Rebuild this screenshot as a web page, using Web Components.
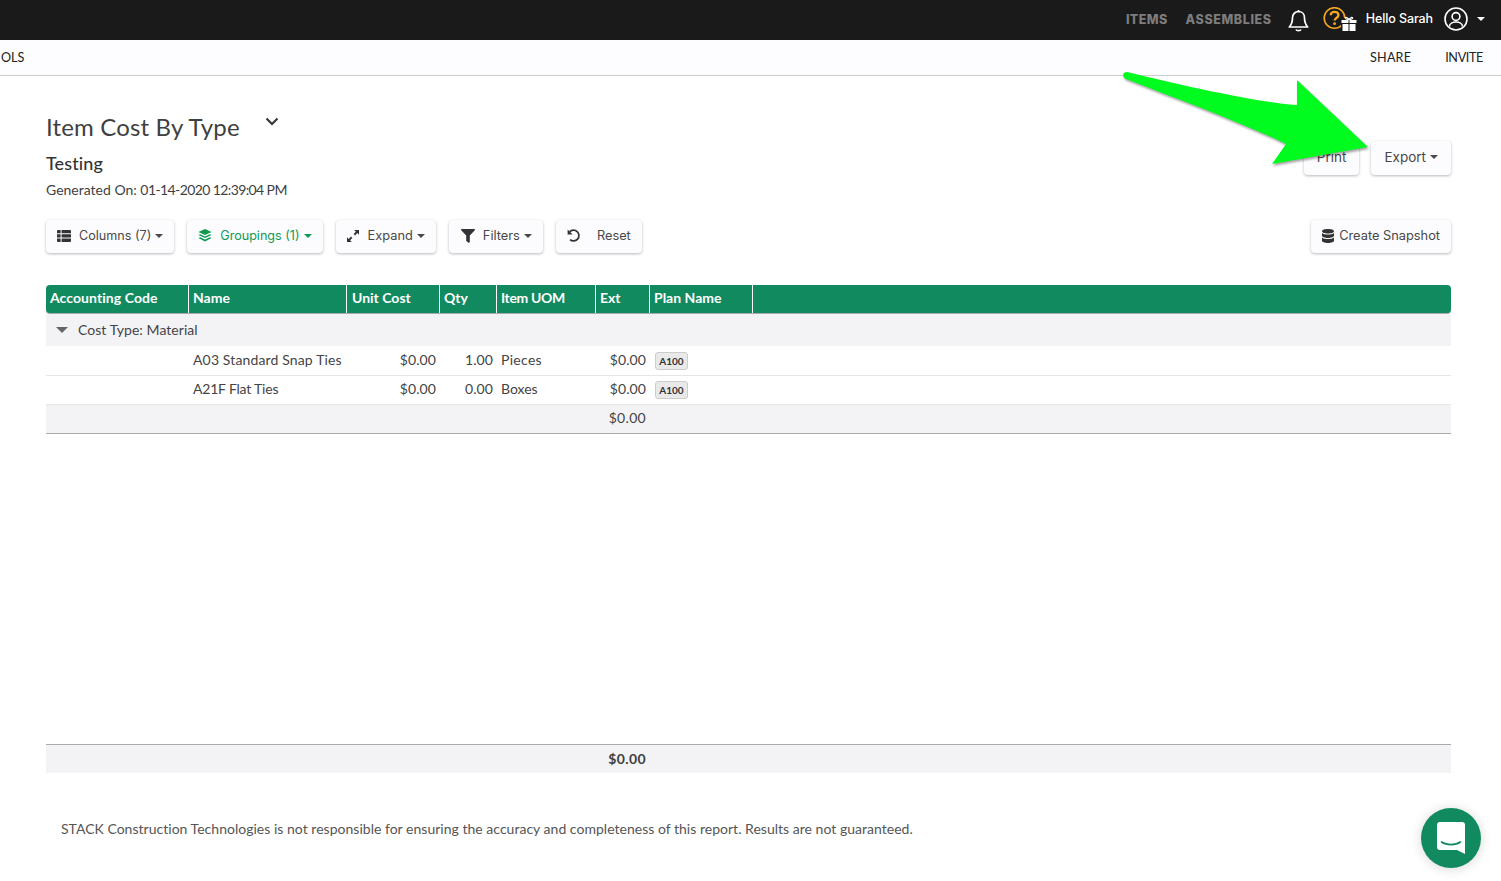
<!DOCTYPE html>
<html>
<head>
<meta charset="utf-8">
<title>Item Cost By Type</title>
<style>
    html, body { margin: 0; padding: 0; background: #fff; }
    body { height: 881px; overflow: hidden; font-family: "Lato", "Liberation Sans", sans-serif; color: #3f3f3f; }
</style>
</head>
<body>
<app-topbar></app-topbar>
<app-subbar></app-subbar>
<report-page></report-page>
<green-arrow></green-arrow>
<chat-bubble></chat-bubble>

<script>
const caret = `<svg width="8" height="4" viewBox="0 0 8 4"><path d="M0 0h8L4 4z" fill="currentColor"/></svg>`;

const icons = {
    columns: `<svg width="14" height="12" viewBox="0 0 14 12"><path fill="currentColor" d="M0 1a1 1 0 0 1 1-1h2.600v3.300H0zM4.600 0H13a1 1 0 0 1 1 1v2.300H4.600zM0 4.300h3.600v3.300H0zM4.600 4.300H14v3.300H4.600zM0 8.600h3.600V12H1a1 1 0 0 1-1-1zM4.600 8.600H14V11a1 1 0 0 1-1 1H4.600z"/></svg>`,
    layers: `<svg width="14" height="13" viewBox="0 0 14 13"><path fill="currentColor" d="M7 0l6.600 3L7 6 .4 3zM2.200 5.200L7 7.400l4.800-2.200 1.800.8L7 9 .4 6zM2.200 8.200L7 10.400l4.800-2.200 1.800.8L7 12.600.4 9z"/></svg>`,
    expand: `<svg width="12" height="12" viewBox="0 0 12 12"><path fill="currentColor" d="M7.200 0H12v4.800l-1.700-1.700L8 5.400 6.600 4l2.300-2.300zM4.800 12H0V7.200l1.700 1.700L4 6.600 5.400 8 3.100 10.300z"/></svg>`,
    filter: `<svg width="14" height="14" viewBox="0 0 14 14"><path fill="currentColor" d="M.7 0h12.600c.6 0 .9.7.5 1.200L8.800 6.600V13c0 .7-.8 1.100-1.300.7L5.600 12.200a.8.8 0 0 1-.4-.7V6.600L.2 1.200C-.2.700.1 0 .7 0z"/></svg>`,
    undo: `<svg width="14" height="14" viewBox="0 0 14 14"><path fill="none" stroke="currentColor" stroke-width="1.700" d="M2.600 2.800A5.400 5.400 0 1 1 3 10.600"/><path fill="currentColor" d="M.6.4v5h5z"/></svg>`,
    database: `<svg width="12" height="14" viewBox="0 0 12 14"><path fill="currentColor" d="M6 0c3.300 0 6 .9 6 2.200S9.300 4.500 6 4.500 0 3.500 0 2.200 2.700 0 6 0zM0 4c1.200 1 3.500 1.500 6 1.500S10.800 5 12 4v2.800C12 8 9.300 9 6 9S0 8 0 6.800zM0 8.500C1.200 9.500 3.500 10 6 10s4.800-.5 6-1.500v3.300C12 13.100 9.300 14 6 14s-6-.9-6-2.200z"/></svg>`
};

class AppTopbar extends HTMLElement {
    constructor() {
        super();
        this.attachShadow({ mode: "open" });
        this.shadowRoot.innerHTML = `
            <style>
                :host { display: flex; align-items: center; justify-content: flex-end; height: 40px; background: #1a1a1a; color: #fff; font-family: "Inter", sans-serif; padding: 0 16px 2px 0; box-sizing: border-box; }
                .nav { color: #7d7d7d; font-size: 12.5px; font-weight: 800; letter-spacing: .6px; margin-right: 18px; }
                .nav.first { letter-spacing: .4px; }
                .nav.last { margin-right: 16px; }
                .bell { margin: 4px 13px 0 0; display: block; }
                .help { position: relative; width: 26px; height: 24px; margin-right: 18px; }
                .help svg { position: absolute; display: block; }
                .hello { font-size: 12.5px; font-weight: 500; margin: 0 11px 2px 0; letter-spacing: -.1px; }
                .user { display: block; margin-right: 9px; }
                .drop { display: block; color: #fff; }
                .drop svg { display: block; }
            </style>
            <span class="nav first">ITEMS</span>
            <span class="nav last">ASSEMBLIES</span>
            <svg class="bell" width="21" height="24" viewBox="0 0 21 24"><path fill="none" stroke="#fff" stroke-width="1.700" stroke-linejoin="round" d="M10.500 2.500c-3.600 0-6 2.800-6 6.300 0 5.200-1.200 7-3.200 9.200h18.400c-2-2.200-3.200-4-3.200-9.200 0-3.500-2.400-6.300-6-6.300z"/><path fill="none" stroke="#fff" stroke-width="1.700" d="M8 20.500c.6 1.400 4.400 1.400 5 0M10.500 1v1.500"/></svg>
            <div class="help">
                <svg style="left:1px;top:0" width="24" height="24" viewBox="0 0 24 24"><circle cx="11.500" cy="11" r="10.300" fill="none" stroke="#f5a623" stroke-width="1.600"/><path fill="none" stroke="#f5a623" stroke-width="2.300" d="M7.800 8.300c0-4.600 7.600-4.600 7.600 0 0 2.700-3.800 2.700-3.800 5.200"/><circle cx="11.600" cy="16.700" r="1.400" fill="#f5a623"/></svg>
                <svg style="left:19px;top:9px" width="16" height="15" viewBox="0 0 16 15"><rect x="-1" y="2" width="18" height="14" fill="#1a1a1a"/><path fill="#fff" d="M.5 4h7v3h-7zM8.500 4h7v3h-7zM1.500 8h6v7h-6zM8.500 8h6v7h-6z"/><path fill="none" stroke="#fff" stroke-width="1.200" d="M8 3.500C6 .5 3.800 1 4.500 2.500c.4.800 2 1 3.500 1 1.500 0 3.100-.2 3.500-1C12.200 1 10 .5 8 3.500z"/></svg>
            </div>
            <span class="hello">Hello Sarah</span>
            <svg class="user" width="24" height="24" viewBox="0 0 24 24"><circle cx="12" cy="12" r="11" fill="none" stroke="#fff" stroke-width="1.600"/><circle cx="12" cy="9.500" r="3.900" fill="none" stroke="#fff" stroke-width="1.600"/><path fill="none" stroke="#fff" stroke-width="1.600" d="M5.500 19.500c0-6 13-6 13 0"/></svg>
            <span class="drop">${caret}</span>
        `;
    }
}

class AppSubbar extends HTMLElement {
    constructor() {
        super();
        this.attachShadow({ mode: "open" });
        this.shadowRoot.innerHTML = `
            <style>
                :host { display: flex; align-items: center; height: 36px; background: #fdfdff; border-bottom: 1px solid #ccc; box-sizing: border-box; font-family: "Lato", sans-serif; font-size: 12.6px; color: #222; padding: 1px 18px 1px 1px; }
                .left { flex: 1; }
                .share { margin-right: 34px; letter-spacing: .2px; }
                .invite { letter-spacing: -.35px; }
            </style>
            <span class="left">OLS</span>
            <span class="share">SHARE</span>
            <span class="invite">INVITE</span>
        `;
    }
}

class ToolButton extends HTMLElement {
    constructor() {
        super();
        this.attachShadow({ mode: "open" });
        this.shadowRoot.innerHTML = `
            <style>
                :host { display: inline-flex; align-items: center; height: 33px; padding: 0 11px 2px var(--pad-left, 11px); background: #fcfcfe; border-radius: 4px; box-shadow: 0 1px 3px rgba(0,0,0,.28); font-family: "Inter", sans-serif; font-size: var(--btn-size, 12.8px); color: #484848; box-sizing: border-box; white-space: nowrap; }
                :host([green]) { color: #0f9a52; }
                :host([tall]) { height: 34px; padding: 0 13px 3px; font-size: 13.5px; }
                .icon { display: inline-flex; margin-right: var(--icon-gap, 8px); color: #333; }
                :host([green]) .icon { color: #0f9a52; }
                .caret { display: inline-flex; margin-left: 4px; }
                svg { display: block; }
            </style>
            <span class="icon"><slot name="icon"></slot></span><slot></slot><span class="caret"></span>
        `;
    }
    connectedCallback() {
        const name = this.getAttribute("icon");
        const iconBox = this.shadowRoot.querySelector(".icon");
        if (name) iconBox.innerHTML = icons[name];
        else iconBox.style.display = "none";
        const caretBox = this.shadowRoot.querySelector(".caret");
        if (this.hasAttribute("caret")) caretBox.innerHTML = caret;
        else caretBox.style.display = "none";
    }
}

class CostTable extends HTMLElement {
    constructor() {
        super();
        this.attachShadow({ mode: "open" });
        const planTag = `<span class="tag">A100</span>`;
        this.shadowRoot.innerHTML = `
            <style>
                :host { display: block; font-family: "Lato", sans-serif; font-size: 14px; color: #444; }
                .row { display: grid; grid-template-columns: 143px 158px 93px 57px 99px 54px 103px 1fr; align-items: center; box-sizing: border-box; }
                .head { height: 29px; background: #118a60; color: #fff; font-weight: 700; border-bottom: 1px solid #aaa; border-radius: 4px; }
                .head div { height: 28px; line-height: 26px; padding-left: 4px; border-right: 1px solid #fff; box-sizing: border-box; }
                .head div:last-child { border: 0; }
                .head .code { letter-spacing: .07px; }
                .head .unit { padding-left: 5px; }
                .head .uom { letter-spacing: -.35px; }
                .group { height: 32px; background: #f3f3f5; display: flex; align-items: center; padding: 0 0 2px 10px; box-sizing: border-box; letter-spacing: .05px; }
                .group svg { margin: 2px 10px 0 0; color: #666; }
                .item { height: 30px; border-bottom: 1px solid #e6e6e6; padding-bottom: 2px; }
                .item.second { height: 29px; padding-bottom: 3px; }
                .num { text-align: right; padding-right: 4px; letter-spacing: .1px; }
                .txt { padding-left: 4px; }
                .tag { display: inline-block; margin: 2px 0 0 5px; width: 33px; height: 18px; line-height: 17px; box-sizing: border-box; text-align: center; font-size: 10px; font-weight: 700; color: #333; background: #e9e9e9; border: 1px solid #ccc; border-radius: 3px; }
                .sub { height: 29px; background: #f3f3f5; border-bottom: 1px solid #aaa; padding-bottom: 4px; }
                .sub .num { letter-spacing: .3px; }
            </style>
            <div class="row head">
                <div class="code">Accounting Code</div><div>Name</div><div class="unit">Unit Cost</div><div>Qty</div><div class="uom">Item UOM</div><div>Ext</div><div>Plan Name</div><div></div>
            </div>
            <div class="group"><svg width="12" height="6" viewBox="0 0 12 6"><path d="M0 0h12L6 6z" fill="currentColor"/></svg>Cost Type: Material</div>
            <div class="row item">
                <span></span><span class="txt" style="letter-spacing:.14px">A03 Standard Snap Ties</span><span class="num">$0.00</span><span class="num">1.00</span><span class="txt" style="letter-spacing:.3px">Pieces</span><span class="num">$0.00</span><span>${planTag}</span><span></span>
            </div>
            <div class="row item second">
                <span></span><span class="txt" style="letter-spacing:-.2px">A21F Flat Ties</span><span class="num">$0.00</span><span class="num">0.00</span><span class="txt">Boxes</span><span class="num">$0.00</span><span>${planTag}</span><span></span>
            </div>
            <div class="row sub">
                <span></span><span></span><span></span><span></span><span></span><span class="num">$0.00</span><span></span><span></span>
            </div>
        `;
    }
}

class ReportPage extends HTMLElement {
    constructor() {
        super();
        this.attachShadow({ mode: "open" });
        this.shadowRoot.innerHTML = `
            <style>
                :host { display: block; padding: 0 50px 0 46px; font-family: "Lato", sans-serif; color: #3f3f3f; }
                .heading { display: flex; justify-content: space-between; height: 144px; box-sizing: border-box; padding-top: 36px; }
                .title { display: flex; font-size: 24px; line-height: 30px; height: 30px; letter-spacing: .16px; }
                .title svg { margin: 5px 0 0 25px; }
                h2 { margin: 9px 0 0; font-size: 18px; line-height: 24px; font-weight: 500; color: #333; letter-spacing: .1px; }
                .gen { font-size: 14px; line-height: 18px; margin-top: 6px; }
                .gen span { letter-spacing: -.6px; }
                .actions { display: flex; gap: 12px; padding-top: 29px; height: 34px; }
                .bar { display: flex; gap: 13px; height: 33px; }
                .spacer { flex: 1; }
                cost-table { margin-top: 32px; }
                .total { margin-top: 310px; height: 29px; box-sizing: border-box; border-top: 1px solid #aaa; padding-bottom: 2px; background: #f3f3f5; display: grid; grid-template-columns: 600px 1fr; align-items: center; font-size: 14px; font-weight: 700; letter-spacing: .4px; }
                .total span { grid-column: 1; text-align: right; }
                .note { margin: 47px 0 0 15px; font-size: 14px; line-height: 18px; color: #555; letter-spacing: .02px; }
            </style>
            <div class="heading">
                <div>
                    <div class="title">Item Cost By Type
                        <svg width="14" height="9" viewBox="0 0 14 9"><path d="M1.500 1.500L7 7l5.500-5.500" fill="none" stroke="#333" stroke-width="2"/></svg>
                    </div>
                    <h2>Testing</h2>
                    <div class="gen">Generated On: <span>01-14-2020 12:39:04 PM</span></div>
                </div>
                <div class="actions">
                    <tool-button tall>Print</tool-button>
                    <tool-button tall caret>Export</tool-button>
                </div>
            </div>
            <div class="bar">
                <tool-button icon="columns" caret style="--btn-size:12.6px">Columns (7)</tool-button>
                <tool-button icon="layers" caret green style="--btn-size:12.6px">Groupings (1)</tool-button>
                <tool-button icon="expand" caret style="--icon-gap:9px">Expand</tool-button>
                <tool-button icon="filter" caret style="--pad-left:12px">Filters</tool-button>
                <tool-button icon="undo" style="--icon-gap:16px">Reset</tool-button>
                <span class="spacer"></span>
                <tool-button icon="database" style="--icon-gap:5px">Create Snapshot</tool-button>
            </div>
            <cost-table></cost-table>
            <div class="total"><span>$0.00</span></div>
            <div class="note">STACK Construction Technologies is not responsible for ensuring the accuracy and completeness of this report. Results are not guaranteed.</div>
        `;
    }
}

// annotation drawn over the screenshot
class GreenArrow extends HTMLElement {
    constructor() {
        super();
        this.attachShadow({ mode: "open" });
        this.shadowRoot.innerHTML = `
            <style>
                :host { position: absolute; left: 1115px; top: 65px; width: 265px; height: 110px; pointer-events: none; }
                svg { display: block; overflow: visible; filter: drop-shadow(1px 2px 1px rgba(0,0,0,.35)); }
            </style>
            <svg width="265" height="110" viewBox="1115 65 265 110">
                <path fill="#00fb1e" d="M1127 72C1180 85 1260 103 1297 105L1297 80L1368 147L1272 164L1286 144C1240 122 1180 100 1126 79C1122 77 1122 72 1127 72z"/>
            </svg>
        `;
    }
}

class ChatBubble extends HTMLElement {
    constructor() {
        super();
        this.attachShadow({ mode: "open" });
        this.shadowRoot.innerHTML = `
            <style>
                :host { position: absolute; left: 1421px; top: 808px; width: 60px; height: 60px; border-radius: 50%; background: #118a60; box-shadow: 0 1px 12px rgba(0,0,0,.16); display: flex; align-items: center; justify-content: center; }
                svg { display: block; }
            </style>
            <svg width="28" height="32" viewBox="0 0 28 32"><path fill="#fff" d="M3 0h22a3 3 0 0 1 3 3v29l-8-4H3a3 3 0 0 1-3-3V3a3 3 0 0 1 3-3z"/><path fill="none" stroke="#118a60" stroke-width="1.600" stroke-linecap="round" d="M4.500 20c5 3.500 14 3.500 19 0"/></svg>
        `;
    }
}

customElements.define("app-topbar", AppTopbar);
customElements.define("app-subbar", AppSubbar);
customElements.define("tool-button", ToolButton);
customElements.define("cost-table", CostTable);
customElements.define("report-page", ReportPage);
customElements.define("green-arrow", GreenArrow);
customElements.define("chat-bubble", ChatBubble);
</script>
</body>
</html>
